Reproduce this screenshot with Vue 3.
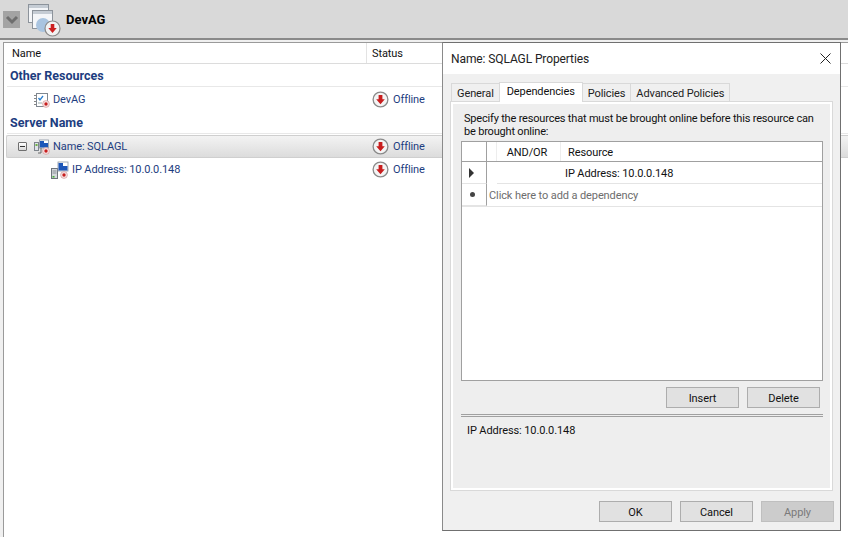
<script setup>
const groups = [
  { title: 'Other Resources', rows: [{ name: 'DevAG', icon: 'res', indent: 27 }] },
  {
    title: 'Server Name',
    rows: [
      { name: 'Name: SQLAGL', icon: 'net', indent: 27, selected: true, toggle: true },
      { name: 'IP Address: 10.0.0.148', icon: 'ip', indent: 44 },
    ],
  },
]
const tabs = ['General', 'Dependencies', 'Policies', 'Advanced Policies']
</script>

<template>
  <div class="page">
    <header class="top">
      <div class="chev">
        <svg width="14" height="10" viewBox="0 0 14 10"><path d="M2 2 L7 7 L12 2" fill="none" stroke="#6e6e6e" stroke-width="3" /></svg>
      </div>
      <svg class="role" width="36" height="34" viewBox="0 0 36 34">
        <rect x="0.5" y="1.5" width="20" height="18" fill="#f4f6f9" stroke="#8c939b" />
        <rect x="1" y="2" width="19" height="3" fill="#c5ccd4" />
        <rect x="4.5" y="7.5" width="20" height="18" fill="#f4f6f9" stroke="#8c939b" />
        <rect x="5" y="8" width="19" height="3" fill="#c5ccd4" />
        <circle cx="15" cy="22" r="7" fill="#a9c4e0" />
        <circle cx="24.5" cy="25.5" r="7.5" fill="#f2f2f2" stroke="#8a8a8a" stroke-width="1.2" />
        <path d="M22.7 21 h3.6 v4 h2.4 l-4.2 5 l-4.2 -5 h2.4 z" fill="#cc1f1f" />
      </svg>
      <strong class="top-title">DevAG</strong>
    </header>

    <main class="panel">
      <div class="cols">
        <div class="col-name">Name</div>
        <div class="col-status">Status</div>
      </div>
      <section v-for="g in groups" :key="g.title" class="group">
        <h3 class="group-title">{{ g.title }}</h3>
        <div
          v-for="r in g.rows"
          :key="r.name"
          class="row"
          :class="{ selected: r.selected }"
        >
          <div class="cell-name" :style="{ paddingLeft: r.indent + 'px' }">
            <span v-if="r.toggle" class="toggle"></span>
            <svg v-if="r.icon === 'res'" class="ico" width="16" height="16" viewBox="0 0 16 16">
              <rect x="2.5" y="1.5" width="11" height="13" fill="#fff" stroke="#7f8790" />
              <path d="M1 3v1M1 6v1M1 9v1M1 12v1" stroke="#555" stroke-width="1.4" />
              <path d="M4.5 6 l1.5 2 l3 -4" fill="none" stroke="#2a7fd0" stroke-width="1.3" />
              <path d="M4 11h4" stroke="#9aa" />
              <circle cx="12" cy="12" r="3.4" fill="#f5e6e6" stroke="#d08a8a" stroke-width=".6" />
              <circle cx="12" cy="12" r="1.7" fill="#c81e1e" />
            </svg>
            <svg v-else-if="r.icon === 'net'" class="ico" width="16" height="16" viewBox="0 0 16 16">
              <rect x="0.5" y="3.5" width="4" height="8" fill="#dfe3e8" stroke="#7e858c" />
              <rect x="1.5" y="5" width="2" height="2" fill="#6cb33f" />
              <rect x="5.5" y="1" width="9" height="8" fill="#fff" stroke="#8b96a3" stroke-width=".8" />
              <path d="M6 8.5 L14 8.5 L14 4 L10 4 L10 2 L6 2 Z" fill="#1d56b8" />
              <path d="M7 9v5H4" fill="none" stroke="#666" />
              <circle cx="12" cy="12" r="3.4" fill="#f5e6e6" stroke="#d08a8a" stroke-width=".6" />
              <circle cx="12" cy="12" r="1.7" fill="#c81e1e" />
            </svg>
            <svg v-else class="ico" width="18" height="18" viewBox="0 0 18 18">
              <rect x="0.5" y="7.5" width="6" height="10" fill="#d5d8dc" stroke="#6d747b" />
              <path d="M1.5 10h4M1.5 12h4" stroke="#8a9097" />
              <rect x="1.5" y="15" width="2" height="1.6" fill="#46b03a" />
              <rect x="7" y="1" width="10" height="9" fill="#fff" stroke="#8b96a3" stroke-width=".8" />
              <path d="M7.5 9.5 L16.5 9.5 L16.5 5 L12 5 L12 2 L7.5 2 Z" fill="#1d56b8" />
              <circle cx="13" cy="14" r="3.4" fill="#f5e6e6" stroke="#d08a8a" stroke-width=".6" />
              <circle cx="13" cy="14" r="1.7" fill="#c81e1e" />
            </svg>
            <span class="link">{{ r.name }}</span>
          </div>
          <div class="cell-status">
            <svg width="17" height="17" viewBox="0 0 17 17">
              <circle cx="8.5" cy="8.5" r="7.4" fill="#f4f4f4" stroke="#8a8a8a" stroke-width="1.3" />
              <path d="M6.6 4 h3.8 v4.2 h2.4 l-4.3 5 l-4.3 -5 h2.4 z" fill="#c81e1e" />
            </svg>
            <span class="link">Offline</span>
          </div>
        </div>
      </section>
    </main>

    <div class="dialog">
      <div class="title-bar">
        <span>Name: SQLAGL Properties</span>
        <svg width="11" height="11" viewBox="0 0 11 11"><path d="M.5 .5 L10.5 10.5 M10.5 .5 L.5 10.5" stroke="#222" stroke-width="1" /></svg>
      </div>
      <div class="dlg-body">
        <div class="tabs">
          <div v-for="t in tabs" :key="t" class="tab" :class="{ active: t === 'Dependencies' }">{{ t }}</div>
        </div>
        <div class="tab-panel">
          <p class="intro">Specify the resources that must be brought online before this resource can be brought online:</p>
          <div class="grid">
            <div class="g-row g-head">
              <div class="g-sel"></div>
              <div class="g-pad"></div>
              <div class="g-andor">AND/OR</div>
              <div class="g-res">Resource</div>
            </div>
            <div class="g-row g-data">
              <div class="g-sel"><span class="arrow"></span></div>
              <div class="g-pad"></div>
              <div class="g-andor"></div>
              <div class="g-res">IP Address: 10.0.0.148</div>
            </div>
            <div class="g-row g-new">
              <div class="g-sel"><span class="star"></span></div>
              <div class="g-hint">Click here to add a dependency</div>
            </div>
          </div>
          <div class="actions inner">
            <button class="btn">Insert</button>
            <button class="btn">Delete</button>
          </div>
          <div class="rule"></div>
          <div class="desc">IP Address: 10.0.0.148</div>
        </div>
      </div>
      <div class="actions footer">
        <button class="btn">OK</button>
        <button class="btn">Cancel</button>
        <button class="btn disabled">Apply</button>
      </div>
    </div>
  </div>
</template>

<style>
html, body { margin: 0; padding: 0; background: #f0f0f0; overflow: hidden; }
</style>

<style scoped>
.page {
  position: relative;
  width: 848px;
  height: 537px;
  overflow: hidden;
  background: #f0f0f0;
  font-family: "Roboto", "Noto Sans", sans-serif;
  font-size: 11px;
  letter-spacing: -0.1px;
  color: #111;
  display: flex;
  flex-direction: column;
}
.top {
  height: 38px;
  flex: none;
  background: #d9d9d9;
  border-bottom: 2px solid #8a8a8a;
  display: flex;
  align-items: center;
  padding-left: 3px;
  box-sizing: content-box;
}
.chev {
  width: 17px;
  height: 17px;
  background: #a3a3a3;
  display: flex;
  align-items: center;
  justify-content: center;
  margin-top: 1px;
}
.role { margin-left: 8px; margin-top: 1px; }
.top-title { margin-left: 2px; font-size: 13px; letter-spacing: 0; color: #000; font-weight: 700; }
.panel {
  flex: 1;
  margin: 2px 0 0 3px;
  background: #fff;
  border-left: 1px solid #9a9a9a;
  border-top: 1px solid #9a9a9a;
}
.cols {
  height: 21px;
  box-sizing: border-box;
  display: flex;
  margin-left: 3px;
  border-bottom: 1px solid #dcdcdc;
}
.col-name { width: 360px; padding: 2px 0 0 5px; border-right: 1px solid #e3e3e3; line-height: 18px; box-sizing: border-box; }
.col-status { padding: 2px 0 0 5px; line-height: 18px; }
.group-title {
  margin: 0 0 0 3px;
  height: 21px;
  padding-left: 3px;
  padding-top: 1px;
  line-height: 21px;
  font-size: 12.5px;
  letter-spacing: 0;
  font-weight: 700;
  color: #1d3d80;
  border-bottom: 1px solid #e8e8e8;
}
.group { padding-bottom: 1px; }
.group:first-of-type { padding-bottom: 0; }
.group:first-of-type .row { margin-top: 1px; }
.row {
  height: 23px;
  display: flex;
  align-items: center;
  margin-left: 3px;
}
.row.selected {
  height: 23px;
  margin-top: 1px;
  border: 1px solid #cfcfcf;
  border-right: none;
  border-radius: 2px 0 0 2px;
  background: linear-gradient(#f3f3f3, #dcdcdc);
  margin-left: 2px;
  box-sizing: border-box;
}
.cell-name { width: 362px; display: flex; align-items: center; box-sizing: border-box; position: relative; }
.cell-status { display: flex; align-items: center; gap: 4px; padding-left: 3px; }
.link { color: #1d3d80; }
.ico { margin-right: 3px; flex: none; }
.toggle {
  position: absolute;
  left: 11px;
  top: 50%;
  width: 9px;
  height: 9px;
  margin-top: -5px;
  box-sizing: border-box;
  border: 1px solid #6f6f6f;
  border-radius: 1px;
  background: linear-gradient(#fff, #d8d8d8);
}
.toggle::after {
  content: "";
  position: absolute;
  left: 1px;
  right: 1px;
  top: 3px;
  height: 1px;
  background: #333;
}
.dialog {
  position: absolute;
  left: 442px;
  top: 42px;
  width: 399px;
  height: 489px;
  box-sizing: border-box;
  border: 1px solid #707070;
  border-left-color: #8a8a8a;
  background: #f0f0f0;
  display: flex;
  flex-direction: column;
}
.title-bar {
  height: 31px;
  flex: none;
  background: #fff;
  display: flex;
  align-items: center;
  justify-content: space-between;
  padding: 0 9px 0 8px;
  font-size: 12px;
  letter-spacing: -0.1px;
  color: #222;
}
.dlg-body { flex: 1; padding: 8px 8px 0 7px; display: flex; flex-direction: column; }
.tabs { display: flex; height: 19px; padding-left: 1px; align-items: flex-end; position: relative; z-index: 1; }
.tab {
  height: 18px;
  line-height: 20px;
  padding: 0 5px;
  border: 1px solid #d9d9d9;
  border-bottom: none;
  margin-right: -1px;
  background: #f0f0f0;
  color: #222;
  box-sizing: border-box;
}
.tab.active {
  height: 20px;
  line-height: 18px;
  background: #fff;
  padding: 0 7px;
  margin-bottom: -1px;
  color: #111;
}
.tab-panel {
  height: 390px;
  box-sizing: border-box;
  background: #eeeeee;
  border: 1px solid #d9d9d9;
  box-shadow: inset 0 0 0 2px #fff;
  padding: 10px 9px 0 10px;
  width: 383px;
}
.intro { margin: 0 0 3px 3px; line-height: 13px; color: #111; height: 26px; letter-spacing: -0.19px; }
.grid {
  height: 240px;
  box-sizing: border-box;
  border: 1px solid #a0a0a0;
  background: #fff;
}
.g-row { display: flex; box-sizing: border-box; }
.g-head { height: 20px; line-height: 21px; border-bottom: 1px solid #a0a0a0; }
.g-data { height: 22px; line-height: 23px; }
.g-new { height: 23px; line-height: 24px; border-bottom: 1px solid #e4e4e4; }
.g-sel {
  width: 25px;
  flex: none;
  border-right: 1px solid #a0a0a0;
  box-sizing: border-box;
  display: flex;
  align-items: center;
  justify-content: center;
}
.g-data .g-sel, .g-new .g-sel { border-bottom: 1px solid #e4e4e4; }
.g-pad { width: 10px; border-right: 1px solid #ededed; box-sizing: border-box; flex: none; }
.g-data .g-pad { border-right: none; }
.g-andor { width: 64px; text-align: center; border-right: 1px solid #ededed; box-sizing: border-box; flex: none; padding-right: 3px; }
.g-res { padding-left: 7px; flex: 1; }
.g-data .g-res { padding-left: 4px; border-bottom: 1px solid #e4e4e4; }
.g-data .g-andor { border-right: none; border-bottom: 1px solid #e4e4e4; }
.g-hint { color: #6d6d6d; padding-left: 2px; }
.arrow {
  width: 0;
  height: 0;
  margin-right: 6px;
  border-left: 5px solid #333;
  border-top: 5px solid transparent;
  border-bottom: 5px solid transparent;
}
.star { width: 5px; height: 5px; border-radius: 50%; background: #444; margin-right: 3px; }
.actions { display: flex; gap: 8px; justify-content: flex-end; }
.actions.inner { margin-top: 6px; padding-right: 3px; }
.actions.footer { height: 39px; flex: none; padding: 10px 6px 0 0; box-sizing: border-box; }
.btn {
  width: 73px;
  height: 21px;
  padding: 1px 0 0;
  font: inherit;
  letter-spacing: inherit;
  color: #111;
  background: #e1e1e1;
  border: 1px solid #adadad;
  border-radius: 0;
}
.btn.disabled { background: #cccccc; border-color: #bfbfbf; color: #7a7a7a; }
.rule {
  margin-top: 6px;
  height: 1px;
  border-top: 1px solid #a0a0a0;
  border-bottom: 1px solid #a0a0a0;
}
.desc { margin: 7px 0 0 6px; line-height: 14px; }
</style>
